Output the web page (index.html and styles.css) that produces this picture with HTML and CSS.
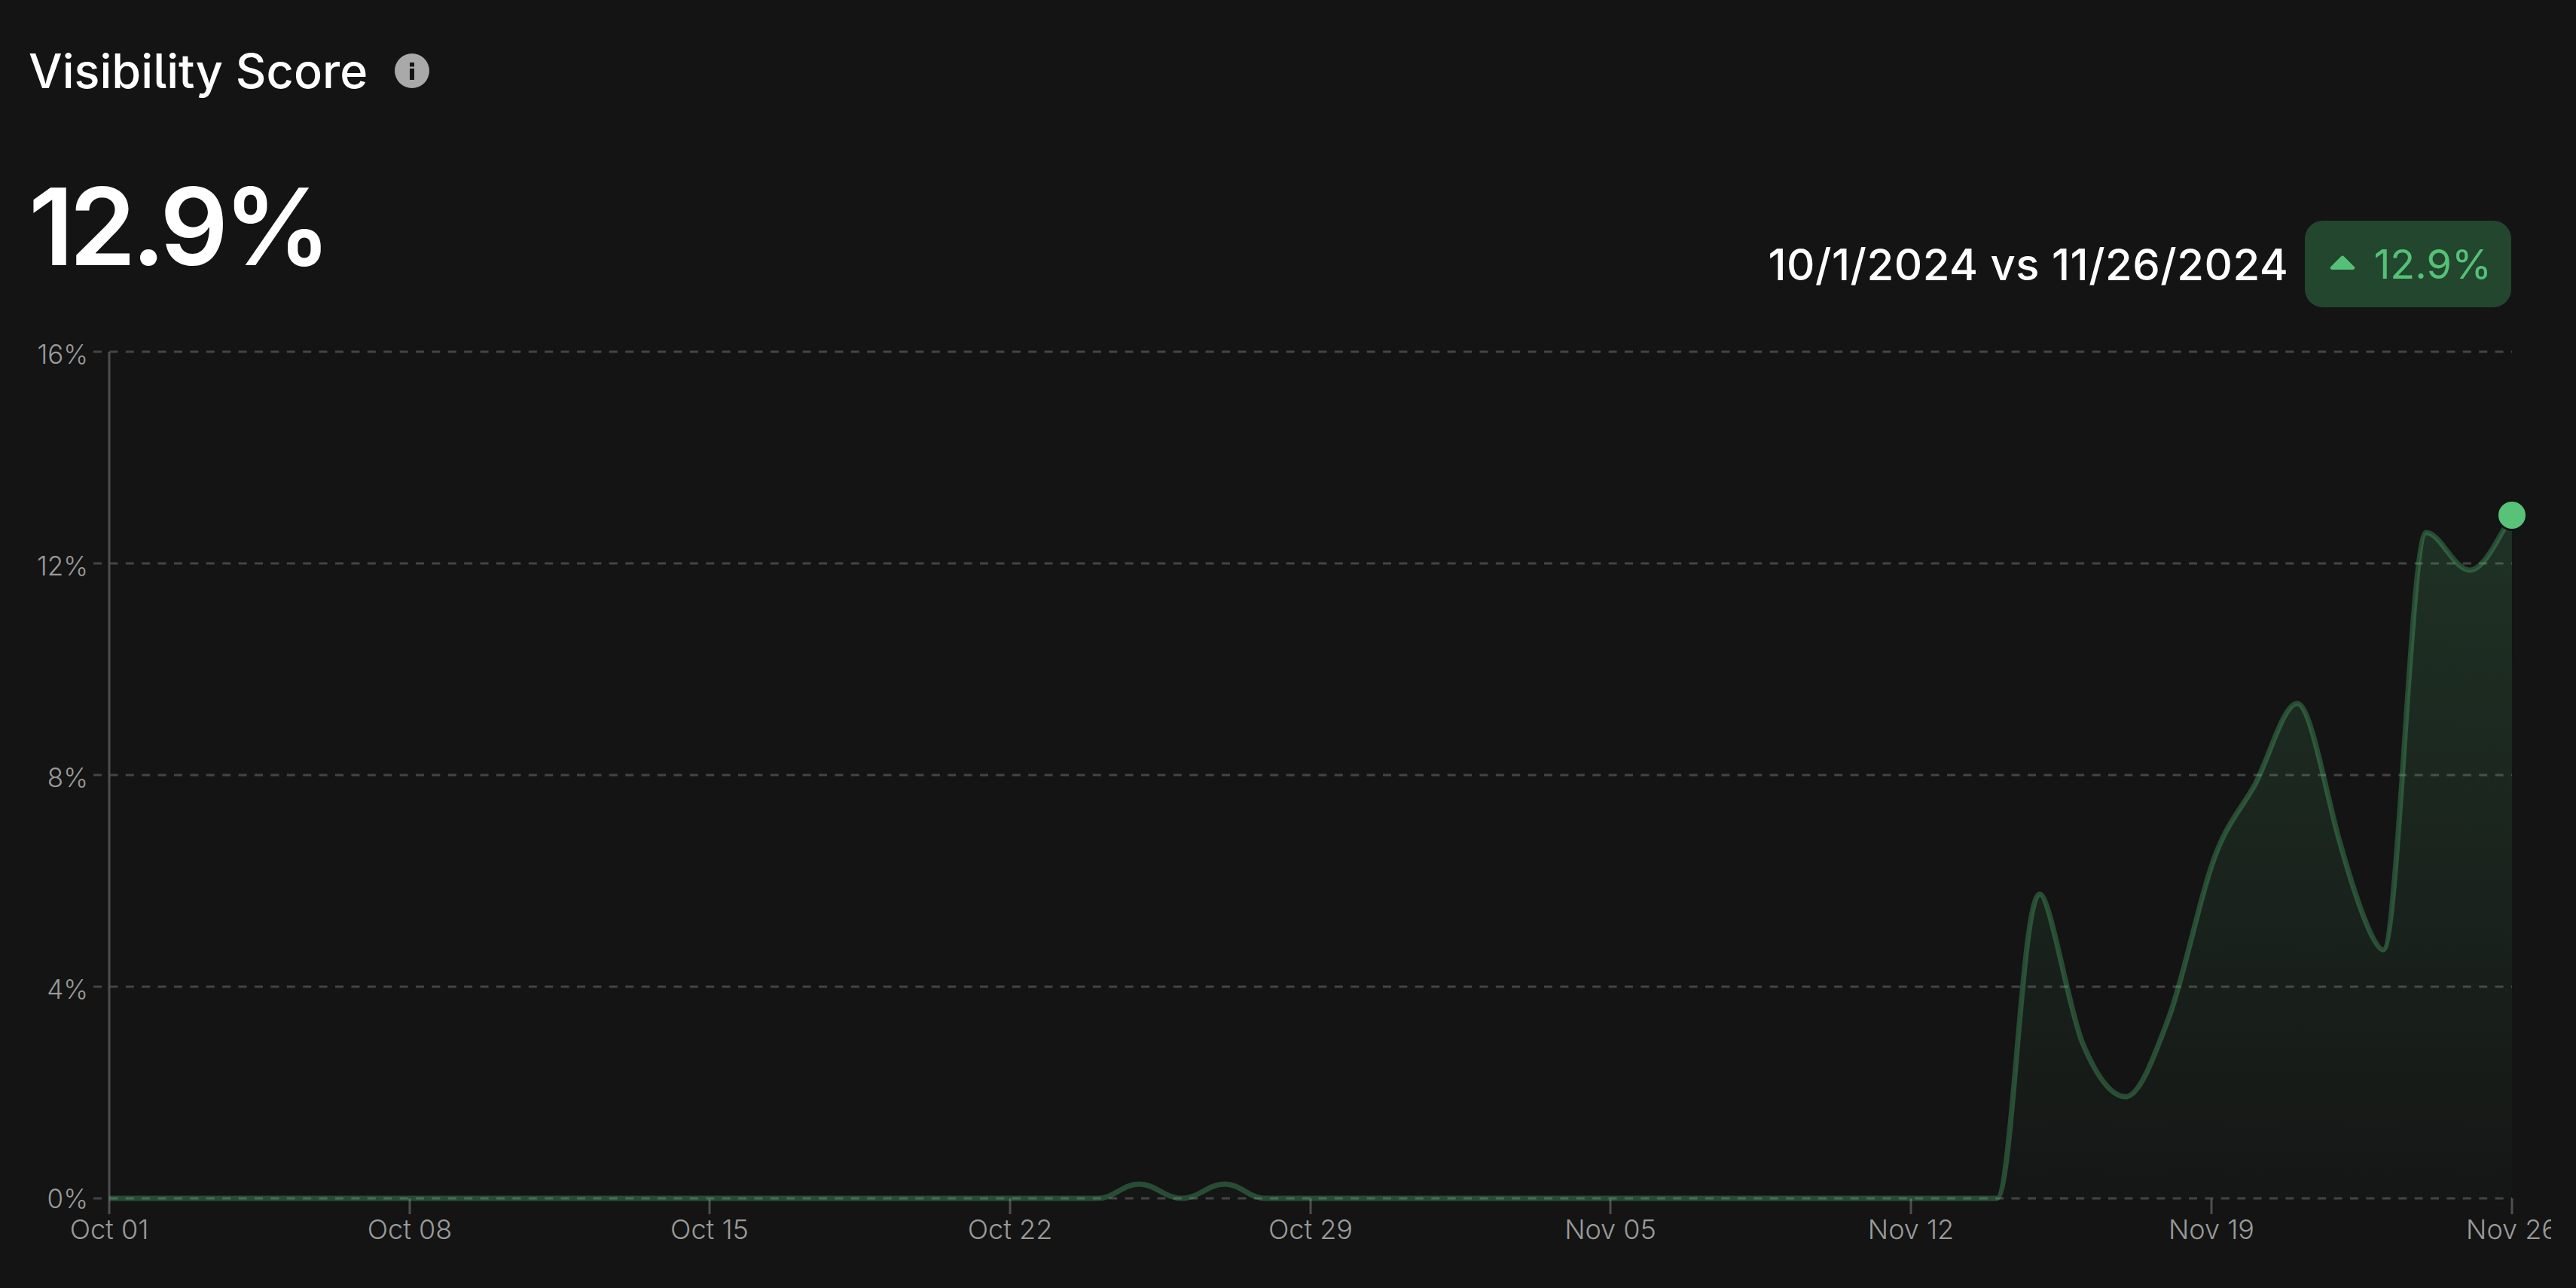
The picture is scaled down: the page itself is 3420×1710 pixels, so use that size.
FILE: index.html
```html
<!DOCTYPE html>
<html lang="en">
<head>
<meta charset="utf-8">
<title>Visibility Score</title>
<link rel="stylesheet" href="styles.css">
</head>
<body>
<main class="card">
  <header class="title-row">
    <h1 class="title">Visibility Score</h1>
    <svg class="info" viewBox="0 0 46 46" aria-hidden="true">
      <circle class="info-disc" cx="23" cy="23" r="23"/>
      <rect class="info-mark" x="20" y="12" width="6" height="5.5"/>
      <rect class="info-mark" x="20" y="20" width="6" height="15"/>
    </svg>
  </header>
  <section class="value-row">
    <div class="value">12.9%</div>
    <div class="compare">
      <span class="range">10/1/2024 vs 11/26/2024</span>
      <span class="badge">
        <svg class="arrow" viewBox="0 0 34 19" aria-hidden="true"><path d="M15 1.5a2.6 2.6 0 0 1 4 0L32.500 15a2.300 2.300 0 0 1-1.700 4H3.200a2.300 2.300 0 0 1-1.700-4z"/></svg>
        <span class="delta">12.9%</span>
      </span>
    </div>
  </section>
  <svg class="chart" viewBox="0 440 3387 1270" aria-label="Visibility score chart">
    <defs>
      <linearGradient id="area" x1="0" y1="684" x2="0" y2="1591" gradientUnits="userSpaceOnUse">
        <stop offset="0" stop-color="#55c176" stop-opacity="0.17"/>
        <stop offset="1" stop-color="#55c176" stop-opacity="0.015"/>
      </linearGradient>
    </defs>
    <g class="grid">
      <line x1="124" y1="467" x2="3335" y2="467"/>
      <line x1="124" y1="748" x2="3335" y2="748"/>
      <line x1="124" y1="1029" x2="3335" y2="1029"/>
      <line x1="124" y1="1310" x2="3335" y2="1310"/>
      <line x1="124" y1="1591" x2="3335" y2="1591"/>
    </g>
    <g class="axis">
      <line x1="145" y1="467" x2="145" y2="1612"/>
      <line x1="544" y1="1591" x2="544" y2="1612"/>
      <line x1="942" y1="1591" x2="942" y2="1612"/>
      <line x1="1341" y1="1591" x2="1341" y2="1612"/>
      <line x1="1740" y1="1591" x2="1740" y2="1612"/>
      <line x1="2138" y1="1591" x2="2138" y2="1612"/>
      <line x1="2537" y1="1591" x2="2537" y2="1612"/>
      <line x1="2936" y1="1591" x2="2936" y2="1612"/>
      <line x1="3335" y1="1591" x2="3335" y2="1612"/>
    </g>
    <path class="area" d="M145 1591H1457C1480 1591 1490 1572 1512 1572C1535 1572 1546 1591 1569 1591C1592 1591 1603 1572 1626 1572C1648 1572 1658 1591 1680 1591H2651C2672 1591 2684 1187 2708 1187C2722 1187 2746 1339 2765 1385C2784 1430 2803 1456 2822 1456C2841 1456 2860 1402 2879 1352C2898 1302 2917 1207 2936 1150C2955 1093 2974 1077 2993 1043C3012 1009 3031 934 3050 934C3068 934 3088 1055 3107 1120C3124 1180 3150 1261 3164 1261C3184 1261 3201 707 3221 707C3240 707 3258 757 3279 757C3298 757 3316 715 3335 684V1591Z"/>
    <path class="line" d="M145 1591H1457C1480 1591 1490 1572 1512 1572C1535 1572 1546 1591 1569 1591C1592 1591 1603 1572 1626 1572C1648 1572 1658 1591 1680 1591H2651C2672 1591 2684 1187 2708 1187C2722 1187 2746 1339 2765 1385C2784 1430 2803 1456 2822 1456C2841 1456 2860 1402 2879 1352C2898 1302 2917 1207 2936 1150C2955 1093 2974 1077 2993 1043C3012 1009 3031 934 3050 934C3068 934 3088 1055 3107 1120C3124 1180 3150 1261 3164 1261C3184 1261 3201 707 3221 707C3240 707 3258 757 3279 757C3298 757 3316 715 3335 684"/>
    <circle class="dot" cx="3335" cy="684" r="18"/>
    <g class="y-labels">
      <text x="117" y="483">16%</text>
      <text x="117" y="764">12%</text>
      <text x="117" y="1045">8%</text>
      <text x="117" y="1326">4%</text>
      <text x="117" y="1604">0%</text>
    </g>
    <g class="x-labels">
      <text x="145" y="1645">Oct 01</text>
      <text x="544" y="1645">Oct 08</text>
      <text x="942" y="1645">Oct 15</text>
      <text x="1341" y="1645">Oct 22</text>
      <text x="1740" y="1645">Oct 29</text>
      <text x="2138" y="1645">Nov 05</text>
      <text x="2537" y="1645">Nov 12</text>
      <text x="2936" y="1645">Nov 19</text>
      <text x="3335" y="1645">Nov 26</text>
    </g>
  </svg>
</main>
</body>
</html>
```
FILE: styles.css
```css
html, body {
  margin: 0;
  height: 100%;
  background: #141414;
}
body {
  overflow: hidden;
  font-family: Inter, "Liberation Sans", sans-serif;
  font-feature-settings: "cv05" 1;
  color: #fff;
}
.card {
  display: flex;
  flex-direction: column;
  height: 1710px;
  box-sizing: border-box;
  padding-top: 56px;
}
.title-row {
  display: flex;
  align-items: center;
  gap: 36px;
  height: 76px;
  padding-left: 38px;
}
.title {
  margin: 0;
  font-size: 63px;
  font-weight: 500;
  line-height: 76px;
}
.info {
  width: 46px;
  height: 46px;
  flex: none;
}
.info-disc { fill: #a9a9a9; }
.info-mark { fill: #141414; }
.value-row {
  display: flex;
  justify-content: space-between;
  height: 180px;
  margin-top: 96px;
  padding: 0 86px 0 38px;
}
.value {
  font-size: 142px;
  font-weight: 600;
  line-height: 144px;
  letter-spacing: -6px;
}
.compare {
  display: flex;
  align-items: center;
  align-self: flex-end;
  gap: 22px;
}
.range {
  font-size: 58px;
  font-weight: 500;
  line-height: 64px;
  letter-spacing: 0.5px;
}
.badge {
  display: flex;
  align-items: center;
  gap: 24px;
  height: 115px;
  padding: 0 26px 0 33px;
  border-radius: 24px;
  background: #23462f;
}
.arrow {
  width: 34px;
  height: 19px;
  fill: #55c176;
  flex: none;
  margin-top: -4px;
}
.delta {
  font-size: 54px;
  line-height: 64px;
  color: #55c176;
}
.chart {
  display: block;
  width: 3387px;
  height: 1270px;
  margin-top: 32px;
  overflow: hidden;
}
.grid line {
  stroke: #444;
  stroke-width: 3;
  stroke-dasharray: 11 10.4;
}
.axis line {
  stroke: #4e4e4e;
  stroke-width: 3;
}
.area { fill: url(#area); }
.line {
  fill: none;
  stroke: #55c176;
  stroke-opacity: 0.32;
  stroke-width: 7;
}
.dot {
  fill: #58c378;
  stroke: #141414;
  stroke-width: 6;
  paint-order: stroke;
}
.y-labels text,
.x-labels text {
  font-size: 36px;
  font-weight: 300;
  fill: #9a9a9a;
}
.y-labels text { font-size: 35px; text-anchor: end; }
.x-labels text { text-anchor: middle; }
```
